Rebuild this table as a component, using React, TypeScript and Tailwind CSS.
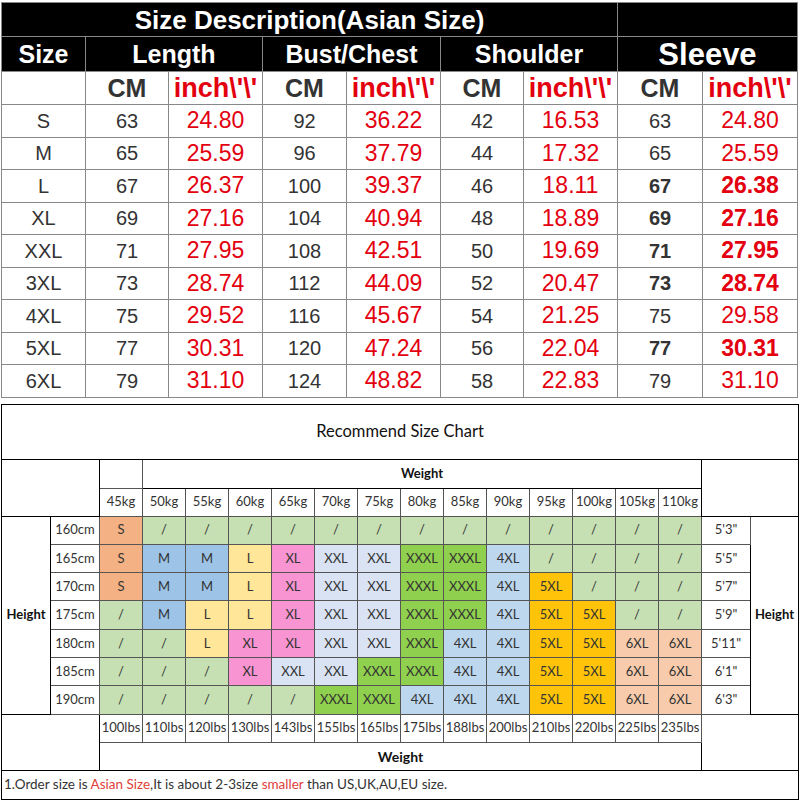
import React from "react";

type SizeRow = {
  size: string;
  vals: string[];
  boldSleeve?: boolean;
};

const sizeRows: SizeRow[] = [
  { size: "S", vals: ["63", "24.80", "92", "36.22", "42", "16.53", "63", "24.80"] },
  { size: "M", vals: ["65", "25.59", "96", "37.79", "44", "17.32", "65", "25.59"] },
  { size: "L", vals: ["67", "26.37", "100", "39.37", "46", "18.11", "67", "26.38"], boldSleeve: true },
  { size: "XL", vals: ["69", "27.16", "104", "40.94", "48", "18.89", "69", "27.16"], boldSleeve: true },
  { size: "XXL", vals: ["71", "27.95", "108", "42.51", "50", "19.69", "71", "27.95"], boldSleeve: true },
  { size: "3XL", vals: ["73", "28.74", "112", "44.09", "52", "20.47", "73", "28.74"], boldSleeve: true },
  { size: "4XL", vals: ["75", "29.52", "116", "45.67", "54", "21.25", "75", "29.58"] },
  { size: "5XL", vals: ["77", "30.31", "120", "47.24", "56", "22.04", "77", "30.31"], boldSleeve: true },
  { size: "6XL", vals: ["79", "31.10", "124", "48.82", "58", "22.83", "79", "31.10"] },
];

const topCols = [84, 83, 94, 84, 94, 83, 94, 85, 95];

const kgs = ["45kg", "50kg", "55kg", "60kg", "65kg", "70kg", "75kg", "80kg", "85kg", "90kg", "95kg", "100kg", "105kg", "110kg"];
const lbs = ["100lbs", "110lbs", "120lbs", "130lbs", "143lbs", "155lbs", "165lbs", "175lbs", "188lbs", "200lbs", "210lbs", "220lbs", "225lbs", "235lbs"];

const chart: { cm: string; ft: string; cells: string[] }[] = [
  { cm: "160cm", ft: "5'3\"", cells: ["S", "/", "/", "/", "/", "/", "/", "/", "/", "/", "/", "/", "/", "/"] },
  { cm: "165cm", ft: "5'5\"", cells: ["S", "M", "M", "L", "XL", "XXL", "XXL", "XXXL", "XXXL", "4XL", "/", "/", "/", "/"] },
  { cm: "170cm", ft: "5'7\"", cells: ["S", "M", "M", "L", "XL", "XXL", "XXL", "XXXL", "XXXL", "4XL", "5XL", "/", "/", "/"] },
  { cm: "175cm", ft: "5'9\"", cells: ["/", "M", "L", "L", "XL", "XXL", "XXL", "XXXL", "XXXL", "4XL", "5XL", "5XL", "/", "/"] },
  { cm: "180cm", ft: "5'11\"", cells: ["/", "/", "L", "XL", "XL", "XXL", "XXL", "XXXL", "4XL", "4XL", "5XL", "5XL", "6XL", "6XL"] },
  { cm: "185cm", ft: "6'1\"", cells: ["/", "/", "/", "XL", "XXL", "XXL", "XXXL", "XXXL", "4XL", "4XL", "5XL", "5XL", "6XL", "6XL"] },
  { cm: "190cm", ft: "6'3\"", cells: ["/", "/", "/", "/", "/", "XXXL", "XXXL", "4XL", "4XL", "4XL", "5XL", "5XL", "6XL", "6XL"] },
];

const cellBg: Record<string, string> = {
  S: "bg-[#f4b183]",
  "/": "bg-[#c6e0b4]",
  M: "bg-[#9dc3e6]",
  L: "bg-[#ffe699]",
  XL: "bg-[#f794d1]",
  XXL: "bg-[#dae3f3]",
  XXXL: "bg-[#8fd04e]",
  "4XL": "bg-[#bdd7ee]",
  "5XL": "bg-[#ffc40a]",
  "6XL": "bg-[#f8cbad]",
};

const bCols = [49, 49, ...Array(14).fill(43), 49, 48];

const td = "border border-[#555] text-center p-0";

const SizeTable = () => (
  <table className="table-fixed border-collapse ml-[1px] w-[796px] font-['Liberation_Sans',Arial,sans-serif]">
    <colgroup>
      {topCols.map((w, i) => (
        <col key={i} style={{ width: w }} />
      ))}
    </colgroup>
    <tbody>
      <tr className="h-[34px] bg-black text-white">
        <td colSpan={7} className="border border-[#888] text-center text-[26px] font-bold leading-none">
          Size Description(Asian Size)
        </td>
        <td colSpan={2} className="border border-[#888]" />
      </tr>
      <tr className="h-[35px] bg-black text-white font-bold leading-none">
        <td className="border border-[#888] text-center text-[25px]">Size</td>
        <td colSpan={2} className="border border-[#888] text-center text-[25px]">Length</td>
        <td colSpan={2} className="border border-[#888] text-center text-[25px]">Bust/Chest</td>
        <td colSpan={2} className="border border-[#888] text-center text-[25px]">Shoulder</td>
        <td colSpan={2} className="border border-[#888] text-center text-[31px]">Sleeve</td>
      </tr>
      <tr className="h-[33px] font-bold leading-none">
        <td className="border border-[#888]" />
        {[0, 1, 2, 3].map((i) => (
          <React.Fragment key={i}>
            <td className="border border-[#888] text-center text-[25px] text-[#333]">CM</td>
            <td className="border border-[#888] text-center text-[27px] text-[#e3000f]">inch\'\'</td>
          </React.Fragment>
        ))}
      </tr>
      {sizeRows.map((r) => (
        <tr key={r.size} className="h-[32.5px] leading-none">
          <td className="border border-[#888] text-center text-[20px] text-[#333]">{r.size}</td>
          {r.vals.map((v, i) => {
            const red = i % 2 === 1;
            const bold = r.boldSleeve && i >= 6;
            return (
              <td
                key={i}
                className={`border border-[#888] text-center ${red ? "text-[23px] text-[#e3000f]" : "text-[20px] text-[#333]"} ${bold ? "font-bold" : ""}`}
              >
                {v}
              </td>
            );
          })}
        </tr>
      ))}
    </tbody>
  </table>
);

const ChartTable = () => (
  <table className="table-fixed border-collapse mt-[6px] ml-[1px] w-[797px] font-['Lato','Open_Sans',sans-serif] text-[13px] text-[#333] border border-black">
    <colgroup>
      {bCols.map((w, i) => (
        <col key={i} style={{ width: w }} />
      ))}
    </colgroup>
    <tbody>
      <tr className="h-[55px]">
        <td colSpan={18} className="border border-black text-center text-[16.5px] text-[#111]">
          Recommend Size Chart
        </td>
      </tr>
      <tr className="h-[29px]">
        <td colSpan={2} rowSpan={2} className="border border-black" />
        <td className={td} />
        <td colSpan={13} className="border border-black text-center font-bold text-[#111]">
          Weight
        </td>
        <td colSpan={2} rowSpan={2} className="border border-black" />
      </tr>
      <tr className="h-[28px]">
        {kgs.map((k) => (
          <td key={k} className={td}>
            {k}
          </td>
        ))}
      </tr>
      {chart.map((row, ri) => (
        <tr key={row.cm} className="h-[28.3px]">
          {ri === 0 && (
            <td rowSpan={7} className="border border-black text-center font-bold text-[#111]">
              Height
            </td>
          )}
          <td className={td}>{row.cm}</td>
          {row.cells.map((c, ci) => (
            <td key={ci} className={`${td} ${cellBg[c]}`}>
              {c}
            </td>
          ))}
          <td className={td}>{row.ft}</td>
          {ri === 0 && (
            <td rowSpan={7} className="border border-black text-center font-bold text-[#111]">
              Height
            </td>
          )}
        </tr>
      ))}
      <tr className="h-[28px]">
        <td colSpan={2} rowSpan={2} className="border border-black" />
        {lbs.map((l) => (
          <td key={l} className={td}>
            {l}
          </td>
        ))}
        <td colSpan={2} rowSpan={2} className="border border-black" />
      </tr>
      <tr className="h-[28px]">
        <td colSpan={14} className="border border-black text-center font-bold text-[14px] text-[#111]">
          Weight
        </td>
      </tr>
      <tr className="h-[29px]">
        <td colSpan={18} className="border border-black text-left pl-[2px] text-[13.5px] text-[#333]">
          1.Order size is <span className="text-[#e0403a]">Asian Size</span>,It is about 2-3size{" "}
          <span className="text-[#e0403a]">smaller</span> than US,UK,AU,EU size.
        </td>
      </tr>
    </tbody>
  </table>
);

export default function App() {
  return (
    <div className="w-[800px] h-[800px] bg-white pt-[2px] overflow-hidden">
      <SizeTable />
      <ChartTable />
    </div>
  );
}
